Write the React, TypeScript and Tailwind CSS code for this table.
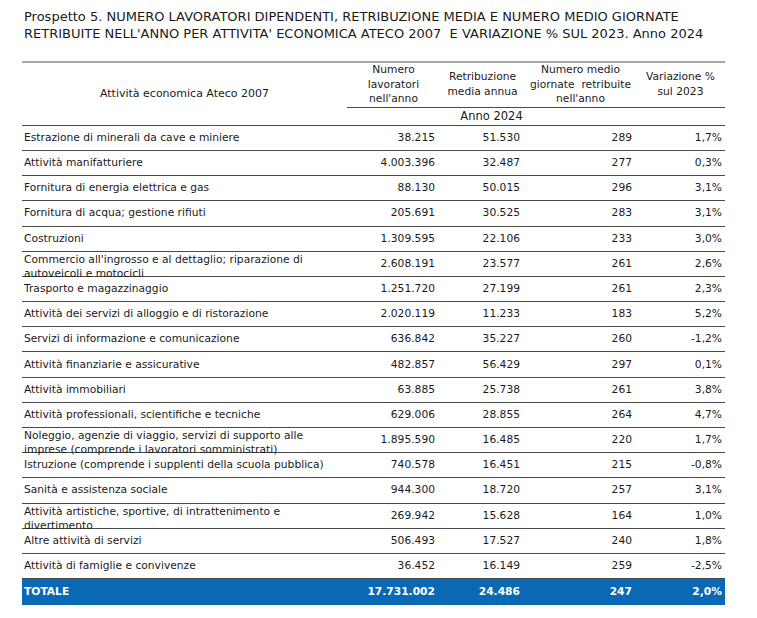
const rows: [string, string, string, string, string, boolean][] = [
  ['Estrazione di minerali da cave e miniere', '38.215', '51.530', '289', '1,7%', false],
  ['Attività manifatturiere', '4.003.396', '32.487', '277', '0,3%', false],
  ['Fornitura di energia elettrica e gas', '88.130', '50.015', '296', '3,1%', false],
  ['Fornitura di acqua; gestione rifiuti', '205.691', '30.525', '283', '3,1%', false],
  ['Costruzioni', '1.309.595', '22.106', '233', '3,0%', false],
  ["Commercio all'ingrosso e al dettaglio; riparazione di autoveicoli e motocicli", '2.608.191', '23.577', '261', '2,6%', true],
  ['Trasporto e magazzinaggio', '1.251.720', '27.199', '261', '2,3%', false],
  ['Attività dei servizi di alloggio e di ristorazione', '2.020.119', '11.233', '183', '5,2%', false],
  ['Servizi di informazione e comunicazione', '636.842', '35.227', '260', '-1,2%', false],
  ['Attività finanziarie e assicurative', '482.857', '56.429', '297', '0,1%', false],
  ['Attività immobiliari', '63.885', '25.738', '261', '3,8%', false],
  ['Attività professionali, scientifiche e tecniche', '629.006', '28.855', '264', '4,7%', false],
  ['Noleggio, agenzie di viaggio, servizi di supporto alle imprese (comprende i lavoratori somministrati)', '1.895.590', '16.485', '220', '1,7%', true],
  ['Istruzione (comprende i supplenti della scuola pubblica)', '740.578', '16.451', '215', '-0,8%', false],
  ['Sanità e assistenza sociale', '944.300', '18.720', '257', '3,1%', false],
  ['Attività artistiche, sportive, di intrattenimento e divertimento', '269.942', '15.628', '164', '1,0%', true],
  ['Altre attività di servizi', '506.493', '17.527', '240', '1,8%', false],
  ['Attività di famiglie e convivenze', '36.452', '16.149', '259', '-2,5%', false],
];

export default function App() {
  return (
    <div className="w-[757px] h-[618px] bg-white text-[#1a1a1a] font-['DejaVu_Sans',Verdana,sans-serif]">
      {/* Title */}
      <div className="pl-[24px] pt-[8px] text-[13px] leading-[17px]">
        <p>Prospetto 5. NUMERO LAVORATORI DIPENDENTI, RETRIBUZIONE MEDIA E NUMERO MEDIO GIORNATE</p>
        <p>RETRIBUITE NELL'ANNO PER ATTIVITA' ECONOMICA ATECO 2007&nbsp; E VARIAZIONE % SUL 2023. Anno 2024</p>
      </div>

      <table className="ml-[22px] mt-[19px] w-[703px] table-fixed border-collapse text-[10.7px]">
        <colgroup>
          <col className="w-[325px]" />
          <col className="w-[93px]" />
          <col className="w-[85px]" />
          <col className="w-[111px]" />
          <col className="w-[89px]" />
        </colgroup>
        <thead>
          <tr className="border-t-2 border-[#a6a6a6] h-[43px]">
            <th rowSpan={2} className="font-normal text-center align-middle border-b border-[#4a4a4a] text-[11px]">
              Attività economica Ateco 2007
            </th>
            <th className="font-normal text-center leading-[14.5px] border-b border-[#4a4a4a]">
              Numero
              <br />
              lavoratori
              <br />
              nell'anno
            </th>
            <th className="font-normal text-center leading-[14.5px] border-b border-[#4a4a4a]">
              Retribuzione
              <br />
              media annua
            </th>
            <th className="font-normal text-center leading-[14.5px] border-b border-[#4a4a4a]">
              Numero medio
              <br />
              giornate&nbsp; retribuite
              <br />
              nell'anno
            </th>
            <th className="font-normal text-center leading-[14.5px] border-b border-[#4a4a4a]">
              Variazione %
              <br />
              sul 2023
            </th>
          </tr>
          <tr className="h-[18px] border-b border-[#4a4a4a]">
            <th colSpan={3} className="font-normal text-center text-[11.5px]">
              Anno 2024
            </th>
            <th />
          </tr>
        </thead>
        <tbody>
          {rows.map((r) => (
            <tr key={r[0]} className="h-[25.2px] border-b border-[#4a4a4a]">
              <td className="pl-[2px] pr-[2px] p-0">
                <div className={`h-[24px] flex leading-[14px] ${r[5] ? 'items-start pt-[1px]' : 'items-center'}`}>
                  <span>{r[0]}</span>
                </div>
              </td>
              <td className="text-right pr-[5px]">{r[1]}</td>
              <td className="text-right pr-[5px]">{r[2]}</td>
              <td className="text-right pr-[4px]">{r[3]}</td>
              <td className="text-right pr-[3px]">{r[4]}</td>
            </tr>
          ))}
          <tr className="h-[26px] bg-[#0a69b5] text-white font-bold">
            <td className="pl-[2px]">TOTALE</td>
            <td className="text-right pr-[5px]">17.731.002</td>
            <td className="text-right pr-[5px]">24.486</td>
            <td className="text-right pr-[4px]">247</td>
            <td className="text-right pr-[3px]">2,0%</td>
          </tr>
        </tbody>
      </table>
    </div>
  );
}
